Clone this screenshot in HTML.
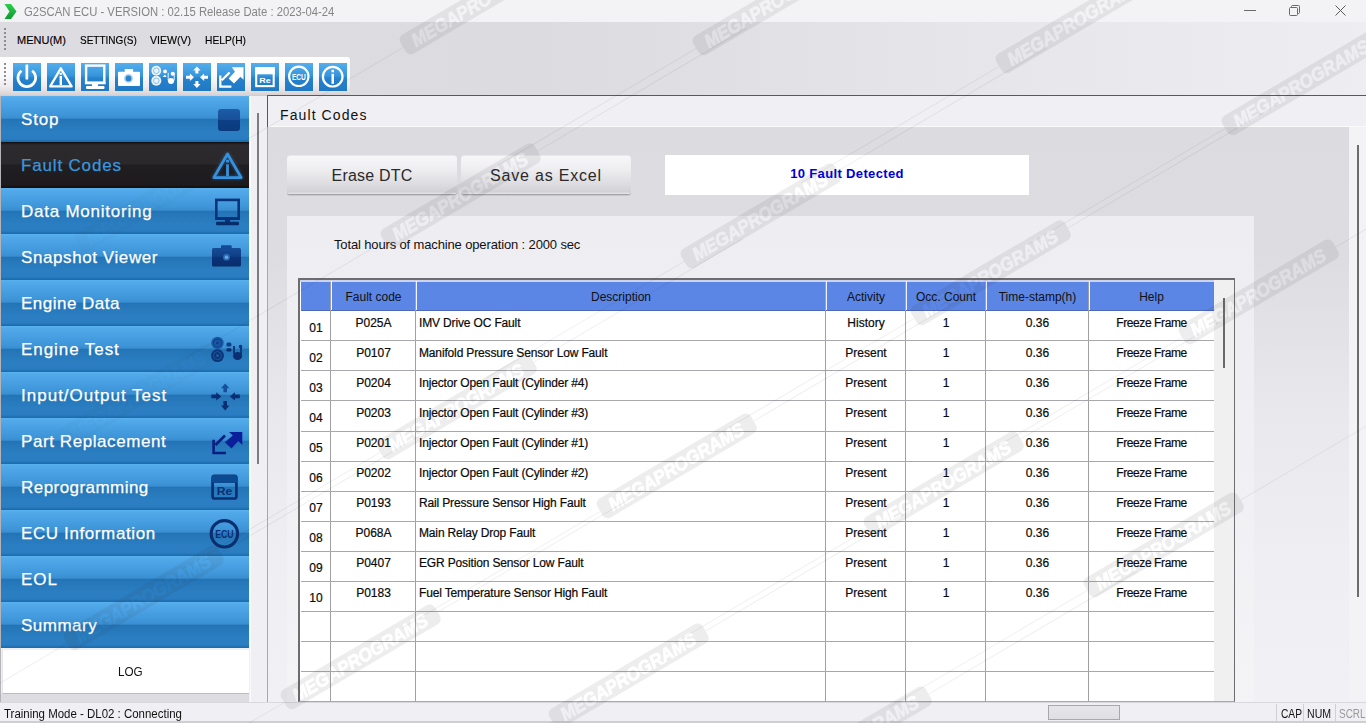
<!DOCTYPE html><html><head><meta charset="utf-8"><style>
*{box-sizing:border-box;margin:0;padding:0}
html,body{width:1366px;height:723px;overflow:hidden;background:#f0eff3;font-family:"Liberation Sans",sans-serif;position:relative}
.a{position:absolute}
svg{position:absolute;overflow:visible}
#title{left:0;top:0;width:1366px;height:22px;background:#f3f2f5}
#title .t{left:24px;top:5px;font-size:12px;color:#858585;white-space:nowrap;transform:scaleX(0.94);transform-origin:0 0}
#band{left:0;top:22px;width:1366px;height:73px;background:linear-gradient(to right,#dddce0 0%,#dcdbdf 40%,#e6e5e9 70%,#eeedf1 100%)}
.menu{top:34px;font-size:11px;color:#000;-webkit-text-stroke:0.15px #000;white-space:nowrap;transform-origin:0 0}
#tb{left:0;top:57px;width:350px;height:38px;background:linear-gradient(#fefefe 0,#f9f8fa 50%,#eeebed 78%,#d9d2d4 100%);border-radius:0 3px 3px 0;box-shadow:0 1px 0 #cfcfd2}
.ic{top:63px;width:28px;height:28px;background:linear-gradient(#55aeec,#3795dd 45%,#2682cd 55%,#1f78c3)}
#side{left:1px;top:96px;width:248px;height:552px}
.it{position:absolute;left:0;width:248px;height:46px;background:linear-gradient(#5ab2f0 0,#52aaeb 2px,#4ba3e5 8px,#4098da 17px,#3a8fd2 22px,#2274b6 23.5px,#2577b9 26px,#2a7ec1 36px,#2a7dc0 43px,#1f6fb0 45px,#1c6aa9 46px)}
.it span{position:absolute;left:20px;top:14px;font-size:17px;color:#fff;white-space:nowrap;letter-spacing:0.45px;-webkit-text-stroke:0.25px #fff}
.it.sel{background:linear-gradient(#120e0f 0,#2c2a2d 3px,#2a282b 22px,#201e21 23px,#1d1b1e 43px,#180f0e 45px,#150d0c 46px)}
.it.sel span{color:#3c96de;-webkit-text-stroke:0.25px #3c96de}
#log{left:2px;top:649px;width:247px;height:45px;background:#fff;border-top:1px solid #f3eeee;border-left:1px solid #e6e6e9;border-bottom:1px solid #bdbdc0}
#logt{left:118px;top:664px;font-size:13px;color:#111;transform:scaleX(0.9);transform-origin:0 0}
#status{left:0;top:702px;width:1366px;height:21px;background:#f0eff3;border-top:1px solid #d9d8dc;border-bottom:2px solid #cfced2}
#main{left:267px;top:95px;width:1099px;height:608px;border-top:1px solid #59595b;border-left:1px solid #a9a9ad;background:#f0eff3}
#tab{left:268px;top:96px;width:1098px;height:31px;background:#f0eff3;border-bottom:1px solid #fafafa}
#tab .t{left:12px;top:11px;font-size:14px;color:#111;letter-spacing:1.1px}
#gray{left:268px;top:127px;width:1081px;height:576px;background:linear-gradient(#dcdbdf 0,#dddce0 22%,#e9e8ec 50%,#efeef2 75%,#f1f0f4 100%)}
.btn{top:156px;width:170px;height:39px;border-radius:3px;background:linear-gradient(#f7f6f8,#eeedf0 35%,#dad9dd 80%,#d2d1d5 94%,#e4e3e6);border-bottom:1px solid #a5a4a8;box-shadow:0 1px 0 #c8c7cb,0 -1px 0 #e8e7ea;font-size:16px;color:#2a2a2a;text-align:center;line-height:39px;white-space:nowrap}
#fd{left:665px;top:155px;width:364px;height:40px;background:#fff;font-size:13px;font-weight:bold;color:#0000d8;text-align:center;line-height:38px;letter-spacing:0.35px}
#panel{left:287px;top:216px;width:967px;height:487px;background:linear-gradient(#eeedf1,#f0eff3 50%,#f4f3f6)}
#hours{left:334px;top:237px;font-size:13px;color:#111;white-space:nowrap;letter-spacing:-0.14px}
#tbl{left:298px;top:278px;width:937px;height:424px;border:2px solid #6d6d70;border-right:1px solid #6d6d70;border-bottom:1px solid #a9a9ac;background:#fff;overflow:hidden}
.th{top:290px;font-size:12px;color:#111;text-align:center;white-space:nowrap}
.td{font-size:12px;color:#0a0a0a;text-align:center;white-space:nowrap;-webkit-text-stroke:0.2px #0a0a0a}
.td.l{text-align:left;letter-spacing:-0.15px}
</style></head><body>
<div id="title" class="a">
<svg style="left:4px;top:3px" width="13" height="17" viewBox="0 0 13 17"><defs><linearGradient id="gg" x1="0" y1="0" x2="0" y2="1"><stop offset="0" stop-color="#2ccf4a"/><stop offset="1" stop-color="#0e9a34"/></linearGradient></defs><path d="M0.5 1 L7 1 L12.5 8.5 L7 16 L0.5 16 L5.5 8.5 Z" fill="url(#gg)"/></svg>
<div class="a t">G2SCAN ECU - VERSION : 02.15 Release Date : 2023-04-24</div>
</div>
<svg style="left:1244px;top:10px" width="12" height="2"><rect x="0" y="0" width="12" height="1" fill="#6a6a6a"/></svg>
<svg style="left:1289px;top:5px" width="12" height="11"><rect x="0.5" y="2.5" width="8" height="8" rx="1" fill="none" stroke="#6a6a6a" stroke-width="1"/><path d="M2.5 2.5 V1.5 Q2.5 0.5 3.5 0.5 H9.5 Q10.5 0.5 10.5 1.5 V7.5 Q10.5 8.5 9.5 8.5 H8.5" fill="none" stroke="#6a6a6a" stroke-width="1"/></svg>
<svg style="left:1335px;top:5px" width="12" height="11"><path d="M0.5 0.5 L10.5 10.5 M10.5 0.5 L0.5 10.5" stroke="#5a5a5a" stroke-width="1"/></svg>
<div id="band" class="a"></div>
<svg style="left:4px;top:28px" width="3" height="24"><rect x="0" y="0" width="2" height="2" fill="#8d8d90"/><rect x="0" y="4" width="2" height="2" fill="#8d8d90"/><rect x="0" y="8" width="2" height="2" fill="#8d8d90"/><rect x="0" y="12" width="2" height="2" fill="#8d8d90"/><rect x="0" y="16" width="2" height="2" fill="#8d8d90"/><rect x="0" y="20" width="2" height="2" fill="#8d8d90"/></svg>
<div class="a menu" style="left:17px">MENU(M)</div>
<div class="a menu" style="left:80px;transform:scaleX(0.91)">SETTING(S)</div>
<div class="a menu" style="left:150px;transform:scaleX(0.96)">VIEW(V)</div>
<div class="a menu" style="left:205px;transform:scaleX(0.93)">HELP(H)</div>
<div id="tb" class="a"></div>
<svg style="left:4px;top:63px" width="3" height="26"><rect x="0" y="0" width="2" height="2" fill="#8d8d90"/><rect x="0" y="4" width="2" height="2" fill="#8d8d90"/><rect x="0" y="8" width="2" height="2" fill="#8d8d90"/><rect x="0" y="12" width="2" height="2" fill="#8d8d90"/><rect x="0" y="16" width="2" height="2" fill="#8d8d90"/><rect x="0" y="20" width="2" height="2" fill="#8d8d90"/></svg>
<div class="a ic" style="left:13px"></div>
<svg style="left:13px;top:63px" width="28" height="28" viewBox="0 0 28 28"><path d="M8.45 7.75 A8.85 8.85 0 1 0 19.15 7.75" fill="none" stroke="#fff" stroke-width="2.7"/><rect x="12.5" y="1.5" width="2.7" height="15" rx="0.6" fill="#fff"/></svg>
<div class="a ic" style="left:47px"></div>
<svg style="left:47px;top:63px" width="28" height="28" viewBox="0 0 28 28"><path d="M13.8 5.3 L24.6 23.4 L3.2 23.4 Z" fill="none" stroke="#fff" stroke-width="2.3" stroke-linejoin="round"/><rect x="12.6" y="9.8" width="2.4" height="2" fill="#fff"/><rect x="12.6" y="13" width="2.4" height="9" fill="#fff"/></svg>
<div class="a ic" style="left:81px"></div>
<svg style="left:81px;top:63px" width="28" height="28" viewBox="0 0 28 28"><rect x="5.1" y="2.6" width="18.2" height="17.4" fill="none" stroke="#fff" stroke-width="2.4"/><rect x="4" y="18.5" width="20.4" height="2.6" fill="#fff"/><rect x="11" y="20" width="6" height="3" fill="#fff"/><rect x="5" y="23" width="18.5" height="3" rx="1" fill="#fff"/></svg>
<div class="a ic" style="left:115px"></div>
<svg style="left:115px;top:63px" width="28" height="28" viewBox="0 0 28 28"><rect x="3" y="8.8" width="22" height="14.2" rx="0.8" fill="#fff"/><rect x="9.7" y="6" width="8.4" height="3.2" rx="0.5" fill="#fff"/><circle cx="13.5" cy="15.4" r="4.4" fill="#a9d3f3"/><circle cx="13.5" cy="15.4" r="2.9" fill="#2a82cc"/></svg>
<div class="a ic" style="left:149px"></div>
<svg style="left:149px;top:63px" width="28" height="28" viewBox="0 0 28 28"><circle cx="7.3" cy="7.7" r="4.9" fill="#eaf4fd"/><circle cx="7.3" cy="7.7" r="2.8" fill="none" stroke="#7db9ea" stroke-width="0.9"/><circle cx="7.3" cy="17.8" r="5" fill="#eaf4fd"/><circle cx="7.3" cy="17.8" r="2.8" fill="none" stroke="#7db9ea" stroke-width="0.9"/><circle cx="16.1" cy="8.4" r="1.9" fill="#fff"/><path d="M14 14 Q15.8 9.8 17.6 14 Z" fill="#fff"/><path d="M19.2 9.8 V17.5 M25.2 9.8 V17.5" stroke="#d5e9f9" stroke-width="1.1"/><circle cx="23.7" cy="10.8" r="2" fill="#fff"/><circle cx="22" cy="18" r="3" fill="#fff"/></svg>
<div class="a ic" style="left:183px"></div>
<svg style="left:183px;top:63px" width="28" height="28" viewBox="0 0 28 28"><path d="M13.9 3.5 L17.6 7.6 L15.4 7.6 L15.4 10.5 L12.4 10.5 L12.4 7.6 L10.2 7.6 Z" fill="#fff"/><path d="M13.9 25 L17.6 20.9 L15.4 20.9 L15.4 18 L12.4 18 L12.4 20.9 L10.2 20.9 Z" fill="#fff"/><path d="M11 14.2 L6.9 10.5 L6.9 12.7 L3 12.7 L3 15.7 L6.9 15.7 L6.9 17.9 Z" fill="#fff"/><path d="M17 14.2 L21.1 10.5 L21.1 12.7 L25 12.7 L25 15.7 L21.1 15.7 L21.1 17.9 Z" fill="#fff"/></svg>
<div class="a ic" style="left:217px"></div>
<svg style="left:217px;top:63px" width="28" height="28" viewBox="0 0 28 28"><path d="M26.5 4.3 L26.5 16.8 L23.4 13.8 L17 20.6 L11.6 15.4 L18 8.8 L14.8 4.3 Z" fill="#fff"/><path d="M12.6 9.5 L4.8 17.3 M3.3 12.6 L3.3 23.7 L14.4 23.7" stroke="#fff" stroke-width="2.3" fill="none"/></svg>
<div class="a ic" style="left:251px"></div>
<svg style="left:251px;top:63px" width="28" height="28" viewBox="0 0 28 28"><rect x="5.2" y="5.2" width="17.5" height="17.9" fill="none" stroke="#fff" stroke-width="2.1"/><rect x="4.2" y="4.2" width="19.5" height="7.1" fill="#fff"/><text x="14.1" y="19.8" font-size="8" font-weight="bold" fill="#fff" text-anchor="middle" font-family="Liberation Sans" textLength="11.5" lengthAdjust="spacingAndGlyphs">Re</text></svg>
<div class="a ic" style="left:285px"></div>
<svg style="left:285px;top:63px" width="28" height="28" viewBox="0 0 28 28"><circle cx="13.8" cy="13.3" r="9.7" fill="none" stroke="#fff" stroke-width="2.2"/><text x="13.9" y="16.6" font-size="8.8" font-weight="bold" fill="#fff" text-anchor="middle" font-family="Liberation Sans" textLength="14" lengthAdjust="spacingAndGlyphs">ECU</text></svg>
<div class="a ic" style="left:319px"></div>
<svg style="left:319px;top:63px" width="28" height="28" viewBox="0 0 28 28"><circle cx="13.7" cy="13.7" r="9.8" fill="none" stroke="#fff" stroke-width="2.2"/><rect x="12.5" y="6.8" width="2.5" height="2.5" fill="#fff"/><rect x="12.5" y="10.8" width="2.5" height="10" fill="#fff"/></svg>
<div id="side" class="a">
<div class="it" style="top:0px"><span style="letter-spacing:0.82px">Stop</span></div>
<div class="it sel" style="top:46px"><span style="letter-spacing:0.83px">Fault Codes</span></div>
<div class="it" style="top:92px"><span style="letter-spacing:0.76px">Data Monitoring</span></div>
<div class="it" style="top:138px"><span style="letter-spacing:0.59px">Snapshot Viewer</span></div>
<div class="it" style="top:184px"><span style="letter-spacing:0.49px">Engine Data</span></div>
<div class="it" style="top:230px"><span style="letter-spacing:0.93px">Engine Test</span></div>
<div class="it" style="top:276px"><span style="letter-spacing:1.01px">Input/Output Test</span></div>
<div class="it" style="top:322px"><span style="letter-spacing:0.58px">Part Replacement</span></div>
<div class="it" style="top:368px"><span style="letter-spacing:0.45px">Reprogramming</span></div>
<div class="it" style="top:414px"><span style="letter-spacing:0.61px">ECU Information</span></div>
<div class="it" style="top:460px"><span style="letter-spacing:1.0px">EOL</span></div>
<div class="it" style="top:506px"><span style="letter-spacing:0.5px">Summary</span></div>
</div>
<svg style="left:0;top:0" width="1366" height="723"><defs><filter id="glow" x="-50%" y="-50%" width="200%" height="200%"><feGaussianBlur stdDeviation="1.5"/></filter><linearGradient id="camg" x1="0" y1="0" x2="0" y2="1"><stop offset="0" stop-color="#174c96"/><stop offset="0.45" stop-color="#0f3f86"/><stop offset="0.5" stop-color="#0a3478"/><stop offset="1" stop-color="#082c6a"/></linearGradient><linearGradient id="stopg" x1="0" y1="0" x2="0" y2="1"><stop offset="0" stop-color="#1d5ca8"/><stop offset="0.5" stop-color="#184f98"/><stop offset="0.5" stop-color="#0d3f86"/><stop offset="1" stop-color="#0b3a7e"/></linearGradient></defs><rect x="218" y="109" width="22" height="22" rx="3" fill="url(#stopg)"/><g opacity="0.35" filter="url(#glow)"><path d="M227.5 154 L241.2 177.6 L213.8 177.6 Z" fill="none" stroke="#2f8fe0" stroke-width="4" stroke-linejoin="round"/></g><path d="M227.5 154 L241.2 177.6 L213.8 177.6 Z" fill="none" stroke="#3593e2" stroke-width="2.8" stroke-linejoin="round"/><rect x="226.1" y="159.8" width="2.8" height="2.8" fill="#3593e2"/><rect x="226.1" y="164.3" width="2.8" height="11.8" fill="#3593e2"/><rect x="216.3" y="199.9" width="22.4" height="18.6" fill="none" stroke="#08337a" stroke-width="2.6"/><rect x="215" y="217" width="25" height="3" fill="#08337a"/><rect x="225" y="219.5" width="5" height="2.5" fill="#08337a"/><rect x="216" y="221.7" width="23" height="3.6" rx="1.2" fill="#072c6c"/><rect x="212" y="248" width="29" height="18.5" rx="1.5" fill="url(#camg)"/><rect x="221" y="245.3" width="10.7" height="3.5" rx="0.8" fill="#154a94"/><circle cx="226.5" cy="257.2" r="3.4" fill="#2a6bb5"/><circle cx="226.5" cy="257.2" r="1.8" fill="#6aa5dc"/><circle cx="217.5" cy="343" r="6.2" fill="#1a5aa6"/><circle cx="217.5" cy="343" r="4" fill="none" stroke="#0d3f86" stroke-width="1"/><circle cx="217.5" cy="343" r="1.5" fill="#0d3f86"/><circle cx="217.5" cy="355.6" r="6.4" fill="#0b3578"/><circle cx="217.5" cy="355.6" r="4" fill="none" stroke="#1d5aa0" stroke-width="1"/><circle cx="217.5" cy="355.6" r="1.6" fill="#1d5aa0"/><rect x="226.4" y="342.4" width="5" height="4" rx="1.5" fill="#0d3f86"/><rect x="226.4" y="348.3" width="5" height="3.2" rx="1.2" fill="#0a3070"/><path d="M234 346 V354 M241 346 V354" stroke="#0b3a7e" stroke-width="2"/><circle cx="240.5" cy="346.5" r="1.8" fill="#0b3a7e"/><ellipse cx="237.6" cy="356" rx="4.6" ry="4" fill="#0a2f72"/><path d="M225.2 383.5 L229.4 388.2 L227 388.2 L227 392.2 L223.4 392.2 L223.4 388.2 L221 388.2 Z" fill="#16509a"/><path d="M225.2 410.5 L229.4 405.5 L227 405.5 L227 401 L223.4 401 L223.4 405.5 L221 405.5 Z" fill="#0a2e72"/><path d="M221.3 396.4 L216.3 392.2 L216.3 394.6 L211.3 394.6 L211.3 398.2 L216.3 398.2 L216.3 400.6 Z" fill="#0a2e72"/><path d="M229.9 396.4 L234.9 392.2 L234.9 394.6 L239.8 394.6 L239.8 398.2 L234.9 398.2 L234.9 400.6 Z" fill="#0a2e72"/><path d="M229 432 L242.3 432 L242.3 445 L238.3 441 L231.5 448.6 L224.8 442.3 L232.8 435.6 Z" fill="#0a1f9a"/><path d="M225 435.5 L215.5 445 M213.6 439.8 L213.6 453 L226 453" stroke="#0a1f80" stroke-width="2.6" fill="none" stroke-linejoin="miter"/><rect x="212.6" y="475.9" width="23.8" height="22.6" rx="2" fill="none" stroke="#0a2f72" stroke-width="2.7"/><rect x="212" y="475" width="25" height="8" rx="1.5" fill="#0b4a90"/><text x="224.4" y="495.3" font-size="11" font-weight="bold" fill="#0a2f72" text-anchor="middle" font-family="Liberation Sans" textLength="15.5" lengthAdjust="spacingAndGlyphs">Re</text><circle cx="224.4" cy="533.8" r="13.2" fill="none" stroke="#0a2e6e" stroke-width="3.1"/><text x="224.4" y="537.6" font-size="11" font-weight="bold" fill="#0a2e6e" text-anchor="middle" font-family="Liberation Sans" textLength="18.5" lengthAdjust="spacingAndGlyphs">ECU</text></svg>
<div class="a" style="left:0;top:96px;width:1px;height:606px;background:#b4b4b8"></div><div class="a" style="left:1px;top:694px;width:248px;height:8px;background:#dddce0"></div><div id="log" class="a"></div><div id="logt" class="a">LOG</div>
<div id="main" class="a"></div>
<div id="tab" class="a"><div class="a t">Fault Codes</div></div><div class="a" style="left:267px;top:95px;width:1px;height:32px;background:#59595b"></div><div class="a" style="left:250px;top:96px;width:1px;height:606px;background:#fbfbfd"></div>
<div id="gray" class="a"></div>
<div class="a" style="left:1349px;top:127px;width:17px;height:576px;background:#f3f2f5"></div>
<div class="a" style="left:1357px;top:145px;width:2px;height:452px;background:#6d6d70"></div>
<div class="a" style="left:257px;top:113px;width:2px;height:351px;background:#7d7d80"></div>
<div class="a btn" style="left:287px;letter-spacing:0.2px">Erase DTC</div>
<div class="a btn" style="left:461px;letter-spacing:0.8px">Save as Excel</div>
<div id="fd" class="a">10 Fault Detected</div>
<div id="panel" class="a"></div>
<div id="hours" class="a">Total hours of machine operation : 2000 sec</div>
<div id="tbl" class="a"></div>
<div class="a" style="left:300px;top:280px;width:914px;height:2px;background:#cdd3ee"></div><div class="a" style="left:301px;top:282px;width:913px;height:29px;background:#5b86e5;border-bottom:1px solid #4f68b8"></div>
<div class="a th" style="left:331px;width:85px">Fault code</div>
<div class="a th" style="left:416px;width:410px">Description</div>
<div class="a th" style="left:826px;width:80px">Activity</div>
<div class="a th" style="left:906px;width:80px">Occ. Count</div>
<div class="a th" style="left:986px;width:103px">Time-stamp(h)</div>
<div class="a th" style="left:1089px;width:125px">Help</div>
<div class="a" style="left:330px;top:282px;width:1px;height:419px;background:#a0a0a4"></div><div class="a" style="left:331px;top:281px;width:1px;height:29px;background:#f4f6ff"></div>
<div class="a" style="left:415px;top:282px;width:1px;height:419px;background:#a0a0a4"></div><div class="a" style="left:416px;top:281px;width:1px;height:29px;background:#f4f6ff"></div>
<div class="a" style="left:825px;top:282px;width:1px;height:419px;background:#a0a0a4"></div><div class="a" style="left:826px;top:281px;width:1px;height:29px;background:#f4f6ff"></div>
<div class="a" style="left:905px;top:282px;width:1px;height:419px;background:#a0a0a4"></div><div class="a" style="left:906px;top:281px;width:1px;height:29px;background:#f4f6ff"></div>
<div class="a" style="left:985px;top:282px;width:1px;height:419px;background:#a0a0a4"></div><div class="a" style="left:986px;top:281px;width:1px;height:29px;background:#f4f6ff"></div>
<div class="a" style="left:1088px;top:282px;width:1px;height:419px;background:#a0a0a4"></div><div class="a" style="left:1089px;top:281px;width:1px;height:29px;background:#f4f6ff"></div>
<div class="a" style="left:301px;top:340px;width:913px;height:1px;background:#a8a8ac"></div>
<div class="a" style="left:301px;top:370px;width:913px;height:1px;background:#a8a8ac"></div>
<div class="a" style="left:301px;top:400px;width:913px;height:1px;background:#a8a8ac"></div>
<div class="a" style="left:301px;top:431px;width:913px;height:1px;background:#a8a8ac"></div>
<div class="a" style="left:301px;top:461px;width:913px;height:1px;background:#a8a8ac"></div>
<div class="a" style="left:301px;top:491px;width:913px;height:1px;background:#a8a8ac"></div>
<div class="a" style="left:301px;top:521px;width:913px;height:1px;background:#a8a8ac"></div>
<div class="a" style="left:301px;top:551px;width:913px;height:1px;background:#a8a8ac"></div>
<div class="a" style="left:301px;top:581px;width:913px;height:1px;background:#a8a8ac"></div>
<div class="a" style="left:301px;top:611px;width:913px;height:1px;background:#a8a8ac"></div>
<div class="a" style="left:301px;top:641px;width:913px;height:1px;background:#a8a8ac"></div>
<div class="a" style="left:301px;top:671px;width:913px;height:1px;background:#a8a8ac"></div>
<div class="a td" style="left:301px;top:321px;width:30px">01</div>
<div class="a td" style="left:331px;top:316px;width:85px">P025A</div>
<div class="a td l" style="left:419px;top:316px">IMV Drive OC Fault</div>
<div class="a td" style="left:826px;top:316px;width:80px">History</div>
<div class="a td" style="left:906px;top:316px;width:80px">1</div>
<div class="a td" style="left:986px;top:316px;width:103px">0.36</div>
<div class="a td" style="left:1089px;top:316px;width:125px;letter-spacing:-0.4px">Freeze Frame</div>
<div class="a td" style="left:301px;top:351px;width:30px">02</div>
<div class="a td" style="left:331px;top:346px;width:85px">P0107</div>
<div class="a td l" style="left:419px;top:346px">Manifold Pressure Sensor Low Fault</div>
<div class="a td" style="left:826px;top:346px;width:80px">Present</div>
<div class="a td" style="left:906px;top:346px;width:80px">1</div>
<div class="a td" style="left:986px;top:346px;width:103px">0.36</div>
<div class="a td" style="left:1089px;top:346px;width:125px;letter-spacing:-0.4px">Freeze Frame</div>
<div class="a td" style="left:301px;top:381px;width:30px">03</div>
<div class="a td" style="left:331px;top:376px;width:85px">P0204</div>
<div class="a td l" style="left:419px;top:376px">Injector Open Fault (Cylinder #4)</div>
<div class="a td" style="left:826px;top:376px;width:80px">Present</div>
<div class="a td" style="left:906px;top:376px;width:80px">1</div>
<div class="a td" style="left:986px;top:376px;width:103px">0.36</div>
<div class="a td" style="left:1089px;top:376px;width:125px;letter-spacing:-0.4px">Freeze Frame</div>
<div class="a td" style="left:301px;top:411px;width:30px">04</div>
<div class="a td" style="left:331px;top:406px;width:85px">P0203</div>
<div class="a td l" style="left:419px;top:406px">Injector Open Fault (Cylinder #3)</div>
<div class="a td" style="left:826px;top:406px;width:80px">Present</div>
<div class="a td" style="left:906px;top:406px;width:80px">1</div>
<div class="a td" style="left:986px;top:406px;width:103px">0.36</div>
<div class="a td" style="left:1089px;top:406px;width:125px;letter-spacing:-0.4px">Freeze Frame</div>
<div class="a td" style="left:301px;top:441px;width:30px">05</div>
<div class="a td" style="left:331px;top:436px;width:85px">P0201</div>
<div class="a td l" style="left:419px;top:436px">Injector Open Fault (Cylinder #1)</div>
<div class="a td" style="left:826px;top:436px;width:80px">Present</div>
<div class="a td" style="left:906px;top:436px;width:80px">1</div>
<div class="a td" style="left:986px;top:436px;width:103px">0.36</div>
<div class="a td" style="left:1089px;top:436px;width:125px;letter-spacing:-0.4px">Freeze Frame</div>
<div class="a td" style="left:301px;top:471px;width:30px">06</div>
<div class="a td" style="left:331px;top:466px;width:85px">P0202</div>
<div class="a td l" style="left:419px;top:466px">Injector Open Fault (Cylinder #2)</div>
<div class="a td" style="left:826px;top:466px;width:80px">Present</div>
<div class="a td" style="left:906px;top:466px;width:80px">1</div>
<div class="a td" style="left:986px;top:466px;width:103px">0.36</div>
<div class="a td" style="left:1089px;top:466px;width:125px;letter-spacing:-0.4px">Freeze Frame</div>
<div class="a td" style="left:301px;top:501px;width:30px">07</div>
<div class="a td" style="left:331px;top:496px;width:85px">P0193</div>
<div class="a td l" style="left:419px;top:496px">Rail Pressure Sensor High Fault</div>
<div class="a td" style="left:826px;top:496px;width:80px">Present</div>
<div class="a td" style="left:906px;top:496px;width:80px">1</div>
<div class="a td" style="left:986px;top:496px;width:103px">0.36</div>
<div class="a td" style="left:1089px;top:496px;width:125px;letter-spacing:-0.4px">Freeze Frame</div>
<div class="a td" style="left:301px;top:531px;width:30px">08</div>
<div class="a td" style="left:331px;top:526px;width:85px">P068A</div>
<div class="a td l" style="left:419px;top:526px">Main Relay Drop Fault</div>
<div class="a td" style="left:826px;top:526px;width:80px">Present</div>
<div class="a td" style="left:906px;top:526px;width:80px">1</div>
<div class="a td" style="left:986px;top:526px;width:103px">0.36</div>
<div class="a td" style="left:1089px;top:526px;width:125px;letter-spacing:-0.4px">Freeze Frame</div>
<div class="a td" style="left:301px;top:561px;width:30px">09</div>
<div class="a td" style="left:331px;top:556px;width:85px">P0407</div>
<div class="a td l" style="left:419px;top:556px">EGR Position Sensor Low Fault</div>
<div class="a td" style="left:826px;top:556px;width:80px">Present</div>
<div class="a td" style="left:906px;top:556px;width:80px">1</div>
<div class="a td" style="left:986px;top:556px;width:103px">0.36</div>
<div class="a td" style="left:1089px;top:556px;width:125px;letter-spacing:-0.4px">Freeze Frame</div>
<div class="a td" style="left:301px;top:591px;width:30px">10</div>
<div class="a td" style="left:331px;top:586px;width:85px">P0183</div>
<div class="a td l" style="left:419px;top:586px">Fuel Temperature Sensor High Fault</div>
<div class="a td" style="left:826px;top:586px;width:80px">Present</div>
<div class="a td" style="left:906px;top:586px;width:80px">1</div>
<div class="a td" style="left:986px;top:586px;width:103px">0.36</div>
<div class="a td" style="left:1089px;top:586px;width:125px;letter-spacing:-0.4px">Freeze Frame</div>
<div class="a" style="left:1214px;top:280px;width:20px;height:421px;background:#f0f0f0"></div><div class="a" style="left:1223px;top:298px;width:2px;height:70px;background:#6a6a6c"></div>
<div id="status" class="a"></div>
<div class="a" style="left:4px;top:707px;font-size:12px;color:#111;white-space:nowrap;transform:scaleX(0.955);transform-origin:0 0">Training Mode - DL02 : Connecting</div>
<div class="a" style="left:1048px;top:705px;width:72px;height:15px;background:linear-gradient(#e6e5e8,#dfdee2);border:1px solid #a8a8ab"></div>
<div class="a" style="left:1276px;top:704px;width:1px;height:17px;background:#d0d0d3"></div><div class="a" style="left:1303px;top:704px;width:1px;height:17px;background:#d0d0d3"></div><div class="a" style="left:1335px;top:704px;width:1px;height:17px;background:#d0d0d3"></div><div class="a" style="left:1281px;top:707px;font-size:12px;color:#111;white-space:nowrap;transform:scaleX(0.85);transform-origin:0 0">CAP</div>
<div class="a" style="left:1307px;top:707px;font-size:12px;color:#111;white-space:nowrap;transform:scaleX(0.88);transform-origin:0 0">NUM</div>
<div class="a" style="left:1339px;top:707px;font-size:12px;color:#999;white-space:nowrap;transform:scaleX(0.83);transform-origin:0 0">SCRL</div>
<svg style="left:0;top:0;pointer-events:none" width="1366" height="723"><defs><mask id="wmm" maskUnits="userSpaceOnUse" x="-300" y="-300" width="900" height="600"><rect x="-300" y="-300" width="900" height="600" fill="#fff"/><text x="11" y="6.8" font-family="Liberation Sans" font-weight="bold" font-style="italic" font-size="18.5" textLength="154" lengthAdjust="spacingAndGlyphs" fill="#000" stroke="#000" stroke-width="0.9">MEGAPROGRAMS</text></mask></defs><g transform="translate(403 47) rotate(-30.5)"><path d="M-230 0.5 H0 M178 0.5 H420" stroke="rgba(40,40,50,0.07)" stroke-width="1"/><rect x="0" y="-11" width="178" height="22" rx="6" fill="rgba(60,60,70,0.09)" mask="url(#wmm)"/></g><g transform="translate(696 48) rotate(-30.5)"><path d="M-230 0.5 H0 M178 0.5 H420" stroke="rgba(40,40,50,0.07)" stroke-width="1"/><rect x="0" y="-11" width="178" height="22" rx="6" fill="rgba(60,60,70,0.09)" mask="url(#wmm)"/></g><g transform="translate(999 66) rotate(-30.5)"><path d="M-230 0.5 H0 M178 0.5 H420" stroke="rgba(40,40,50,0.07)" stroke-width="1"/><rect x="0" y="-11" width="178" height="22" rx="6" fill="rgba(60,60,70,0.09)" mask="url(#wmm)"/></g><g transform="translate(1225 128) rotate(-30.5)"><path d="M-230 0.5 H0 M178 0.5 H420" stroke="rgba(40,40,50,0.07)" stroke-width="1"/><rect x="0" y="-11" width="178" height="22" rx="6" fill="rgba(60,60,70,0.09)" mask="url(#wmm)"/></g><g transform="translate(384 241) rotate(-30.5)"><path d="M-230 0.5 H0 M178 0.5 H420" stroke="rgba(40,40,50,0.07)" stroke-width="1"/><rect x="0" y="-11" width="178" height="22" rx="6" fill="rgba(60,60,70,0.09)" mask="url(#wmm)"/></g><g transform="translate(684 261) rotate(-30.5)"><path d="M-230 0.5 H0 M178 0.5 H420" stroke="rgba(40,40,50,0.07)" stroke-width="1"/><rect x="0" y="-11" width="178" height="22" rx="6" fill="rgba(60,60,70,0.09)" mask="url(#wmm)"/></g><g transform="translate(914 318) rotate(-30.5)"><path d="M-230 0.5 H0 M178 0.5 H420" stroke="rgba(40,40,50,0.07)" stroke-width="1"/><rect x="0" y="-11" width="178" height="22" rx="6" fill="rgba(60,60,70,0.09)" mask="url(#wmm)"/></g><g transform="translate(1182 337) rotate(-30.5)"><path d="M-230 0.5 H0 M178 0.5 H420" stroke="rgba(40,40,50,0.07)" stroke-width="1"/><rect x="0" y="-11" width="178" height="22" rx="6" fill="rgba(60,60,70,0.09)" mask="url(#wmm)"/></g><g transform="translate(380 452) rotate(-30.5)"><path d="M-230 0.5 H0 M178 0.5 H420" stroke="rgba(40,40,50,0.07)" stroke-width="1"/><rect x="0" y="-11" width="178" height="22" rx="6" fill="rgba(60,60,70,0.09)" mask="url(#wmm)"/></g><g transform="translate(600 511) rotate(-30.5)"><path d="M-230 0.5 H0 M178 0.5 H420" stroke="rgba(40,40,50,0.07)" stroke-width="1"/><rect x="0" y="-11" width="178" height="22" rx="6" fill="rgba(60,60,70,0.09)" mask="url(#wmm)"/></g><g transform="translate(867 529) rotate(-30.5)"><path d="M-230 0.5 H0 M178 0.5 H420" stroke="rgba(40,40,50,0.07)" stroke-width="1"/><rect x="0" y="-11" width="178" height="22" rx="6" fill="rgba(60,60,70,0.09)" mask="url(#wmm)"/></g><g transform="translate(1087 590) rotate(-30.5)"><path d="M-230 0.5 H0 M178 0.5 H420" stroke="rgba(40,40,50,0.07)" stroke-width="1"/><rect x="0" y="-11" width="178" height="22" rx="6" fill="rgba(60,60,70,0.09)" mask="url(#wmm)"/></g><g transform="translate(67 643) rotate(-30.5)"><path d="M-230 0.5 H0 M178 0.5 H420" stroke="rgba(40,40,50,0.07)" stroke-width="1"/><rect x="0" y="-11" width="178" height="22" rx="6" fill="rgba(60,60,70,0.09)" mask="url(#wmm)"/></g><g transform="translate(284 702) rotate(-30.5)"><path d="M-230 0.5 H0 M178 0.5 H420" stroke="rgba(40,40,50,0.07)" stroke-width="1"/><rect x="0" y="-11" width="178" height="22" rx="6" fill="rgba(60,60,70,0.09)" mask="url(#wmm)"/></g><g transform="translate(552 721) rotate(-30.5)"><path d="M-230 0.5 H0 M178 0.5 H420" stroke="rgba(40,40,50,0.07)" stroke-width="1"/><rect x="0" y="-11" width="178" height="22" rx="6" fill="rgba(60,60,70,0.09)" mask="url(#wmm)"/></g><g transform="translate(775 784) rotate(-30.5)"><path d="M-230 0.5 H0 M178 0.5 H420" stroke="rgba(40,40,50,0.07)" stroke-width="1"/><rect x="0" y="-11" width="178" height="22" rx="6" fill="rgba(60,60,70,0.09)" mask="url(#wmm)"/></g><g transform="translate(78 245) rotate(-30.5)" opacity="0.3"><rect x="0" y="-11" width="178" height="22" rx="6" fill="rgba(60,60,70,0.09)" mask="url(#wmm)"/></g><g transform="translate(62 440) rotate(-30.5)" opacity="0.3"><rect x="0" y="-11" width="178" height="22" rx="6" fill="rgba(60,60,70,0.09)" mask="url(#wmm)"/></g></svg>
</body></html>
